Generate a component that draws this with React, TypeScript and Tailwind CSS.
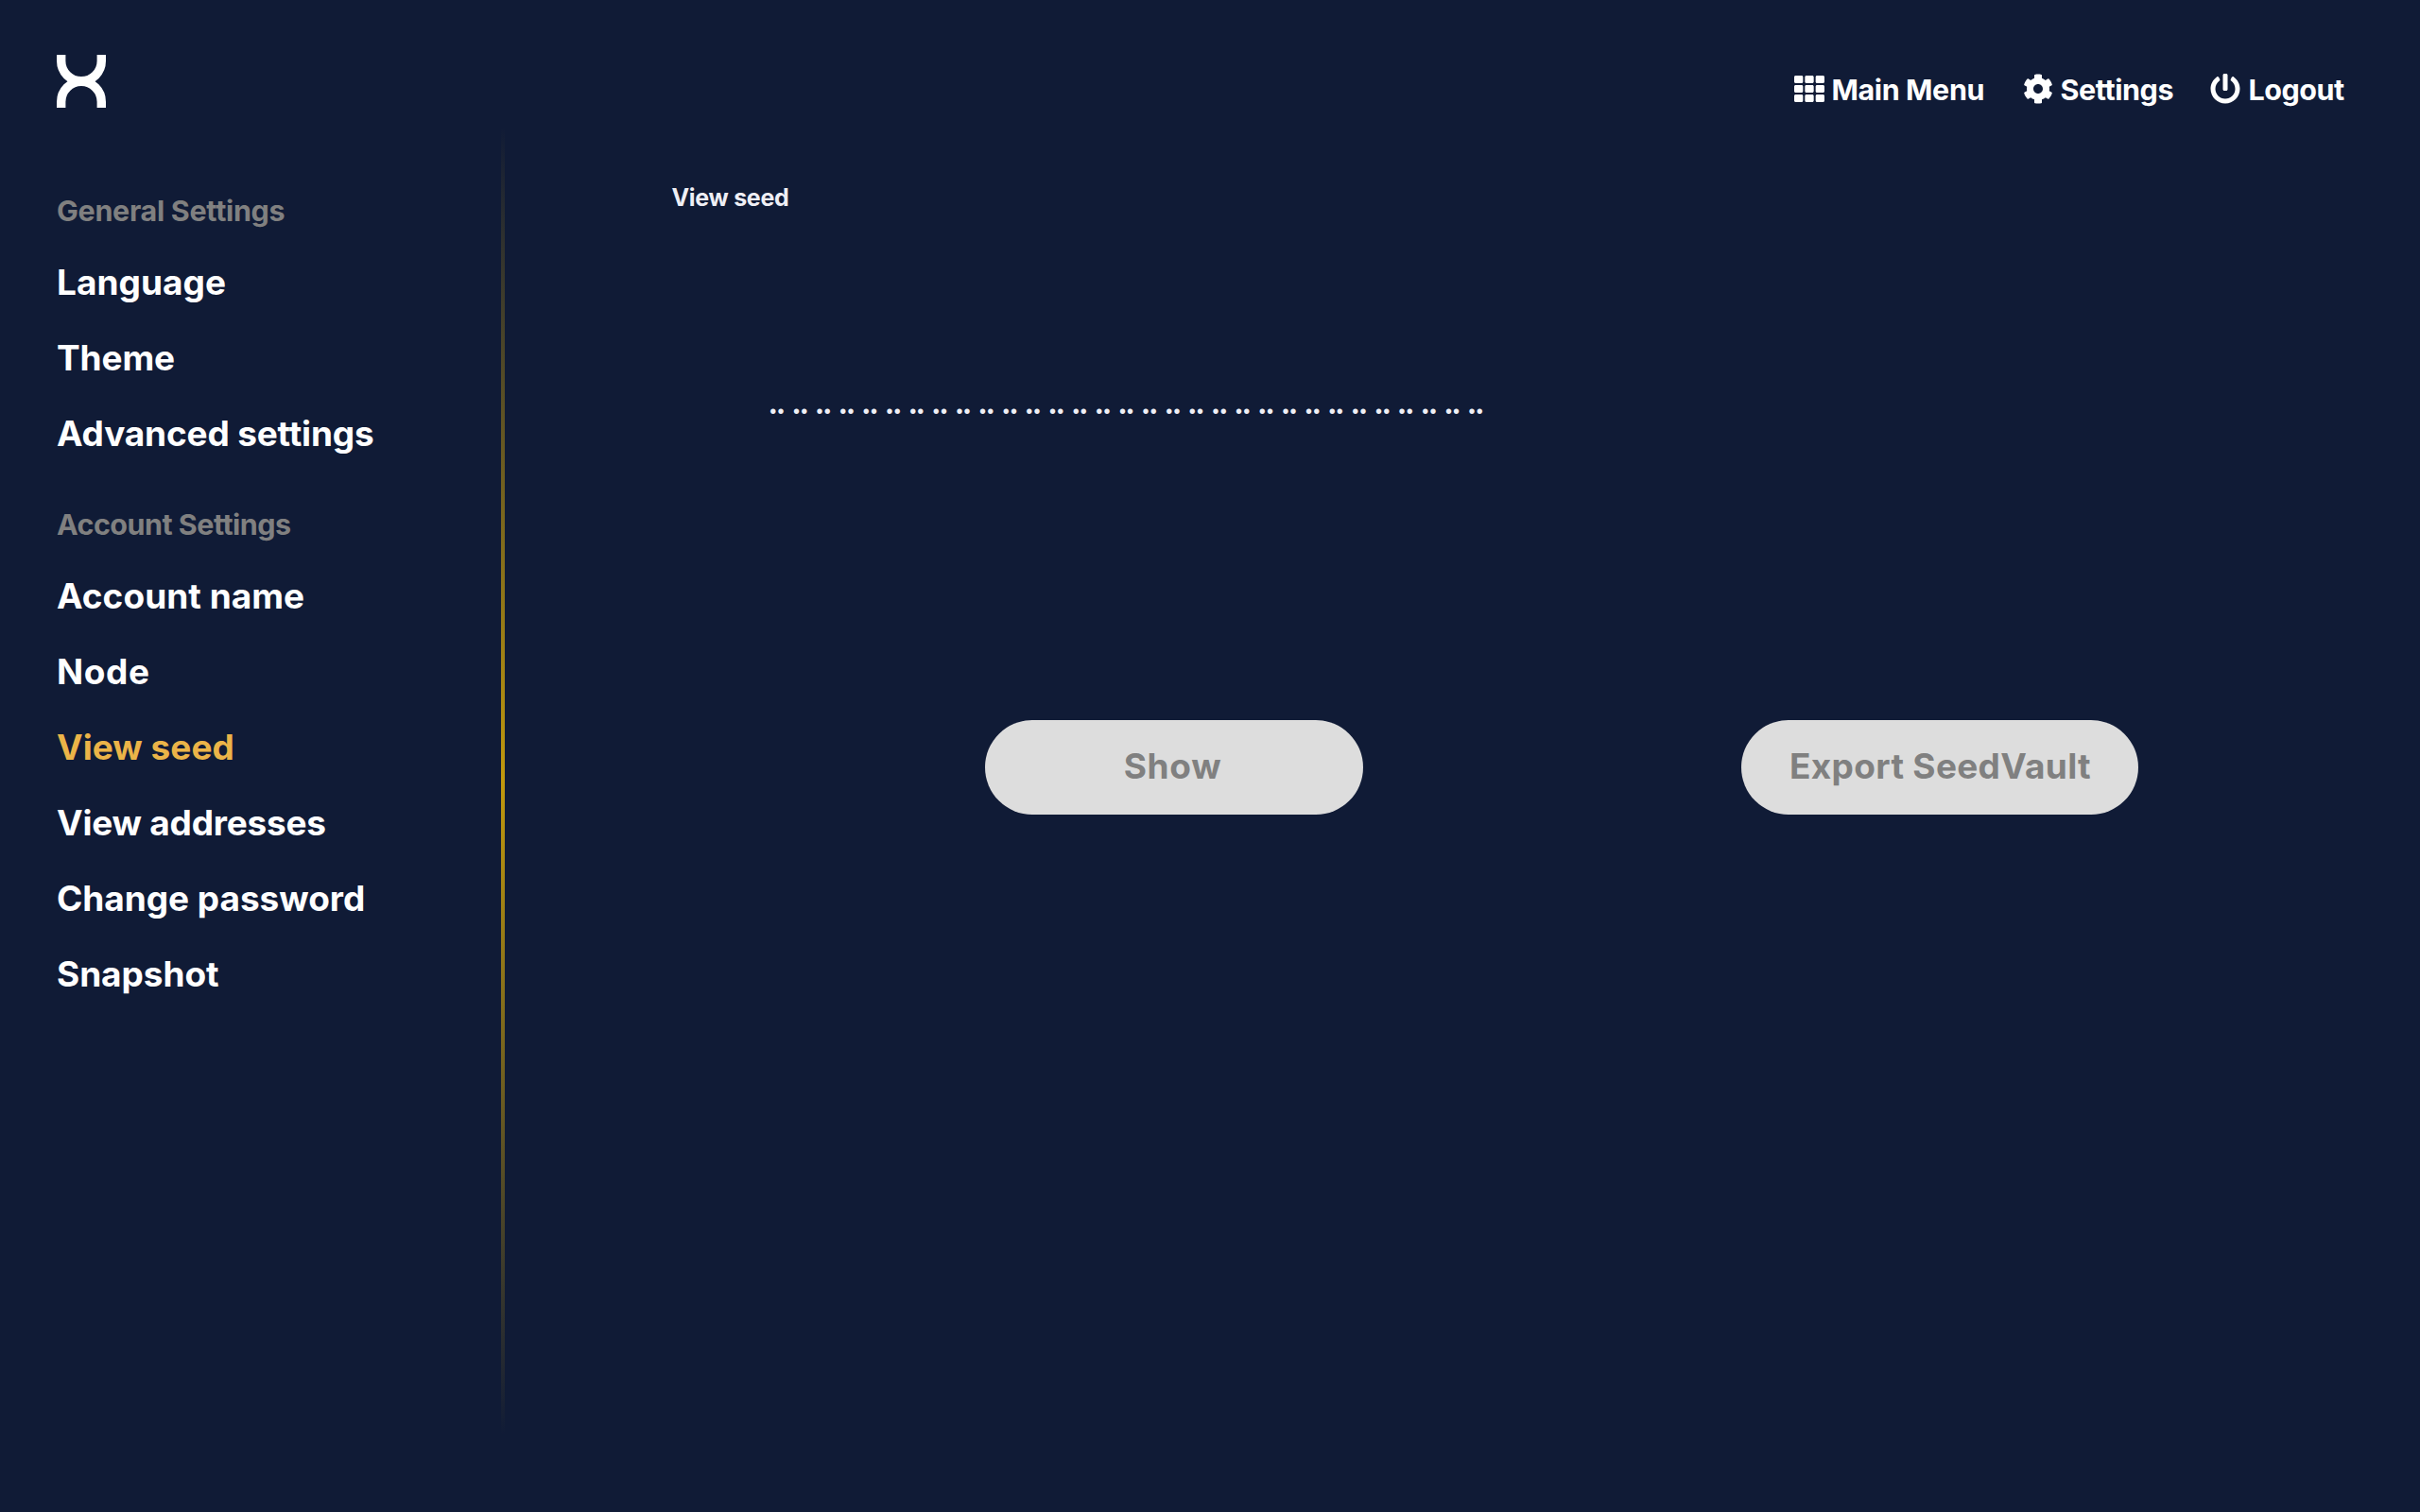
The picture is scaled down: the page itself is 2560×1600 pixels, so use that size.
import React from 'react';
import { FaTh, FaCog, FaPowerOff } from 'react-icons/fa';

type Item = { label: string; tracking: string; active?: boolean };
type Section = { title: string; tracking: string; items: Item[] };

const sections: Section[] = [
  {
    title: 'General Settings',
    tracking: 'tracking-[-0.32px]',
    items: [
      { label: 'Language', tracking: 'tracking-[0.04px]' },
      { label: 'Theme', tracking: 'tracking-[-0.13px]' },
      { label: 'Advanced settings', tracking: 'tracking-[-0.17px]' },
    ],
  },
  {
    title: 'Account Settings',
    tracking: 'tracking-[-0.53px]',
    items: [
      { label: 'Account name', tracking: 'tracking-[0.03px]' },
      { label: 'Node', tracking: 'tracking-[0.59px]' },
      { label: 'View seed', tracking: 'tracking-[0.04px]', active: true },
      { label: 'View addresses', tracking: 'tracking-[-0.22px]' },
      { label: 'Change password', tracking: 'tracking-[-0.04px]' },
      { label: 'Snapshot', tracking: 'tracking-[-0.07px]' },
    ],
  },
];

const seedPairs = Array.from({ length: 31 }, (_, i) => i);

function Logo() {
  return (
    <svg className="mt-[58px] h-14 w-[52px]" viewBox="0 0 52 56" fill="none" stroke="#fff" strokeWidth="9.4">
      <path d="M4.7 0V6.5A21.3 21.3 0 0 0 47.3 6.5V0" />
      <path d="M4.7 56V49.7A21.3 21.3 0 0 1 47.3 49.7V56" />
    </svg>
  );
}

function Header() {
  return (
    <header className="flex h-[150px] items-start justify-between pr-20 pl-15">
      <Logo />
      <nav className="mt-[73px] flex text-[30.5px] leading-10 font-bold">
        <a className="flex w-[242px] items-center gap-[7.5px] whitespace-nowrap">
          <FaTh className="size-8 shrink-0" />
          <span className="pt-0.5 tracking-[-0.4px]">Main Menu</span>
        </a>
        <a className="flex w-[198px] items-center gap-[7.5px] whitespace-nowrap">
          <FaCog className="size-8 shrink-0" />
          <span className="pt-0.5 tracking-[-0.43px]">Settings</span>
        </a>
        <a className="flex w-[142px] items-center gap-[8.5px] whitespace-nowrap">
          <FaPowerOff className="size-8 shrink-0" />
          <span className="pt-0.5 tracking-[-0.5px]">Logout</span>
        </a>
      </nav>
    </header>
  );
}

function Sidebar() {
  return (
    <aside className="flex w-[530px] shrink-0 flex-col gap-[37px] pt-[53px] pl-15">
      {sections.map((s) => (
        <section key={s.title}>
          <h2 className={`mb-[15px] text-[30.5px] leading-10 font-bold text-[#808080] ${s.tracking}`}>{s.title}</h2>
          <ul>
            {s.items.map((item) => (
              <li
                key={item.label}
                className={`h-20 text-[37px] leading-[81px] font-bold ${item.tracking} ${item.active ? 'text-[#ebb448]' : ''}`}
              >
                {item.label}
              </li>
            ))}
          </ul>
        </section>
      ))}
    </aside>
  );
}

function Content() {
  return (
    <main className="flex flex-1 flex-col">
      <h1 className="mt-[39px] ml-[176.5px] text-[25px] leading-[41px] font-bold tracking-[-0.3px] text-[#efeff5]">
        View seed
      </h1>
      <div className="mt-[185px] ml-[280.3px] flex gap-[8.2px] font-['Liberation_Sans',sans-serif] text-[20px] leading-10 tracking-[1.2px] text-[#efeff5]">
        {seedPairs.map((i) => (
          <span key={i} className="w-[16.46px]">
            ••
          </span>
        ))}
      </div>
      <div className="mt-[307px] ml-[508px] flex gap-[400px]">
        <button className="h-[100px] w-[400px] rounded-[50px] bg-[#ddd] pr-[3px] pb-0.5 text-[37px] font-bold tracking-[0.68px] text-[#808080]">
          Show
        </button>
        <button className="h-[100px] w-[420px] rounded-[50px] bg-[#ddd] pb-0.5 pl-px text-[37px] font-bold tracking-[0.32px] whitespace-nowrap text-[#808080]">
          Export SeedVault
        </button>
      </div>
    </main>
  );
}

export default function App() {
  return (
    <div className="flex h-[1600px] w-[2560px] flex-col overflow-hidden bg-[#101b36] font-['Inter',sans-serif] text-white">
      <Header />
      <div className="flex flex-1">
        <Sidebar />
        <div className="-mt-4 h-[1384px] w-1 bg-[linear-gradient(to_bottom,transparent,#c2990c,transparent)]" />
        <Content />
      </div>
    </div>
  );
}
